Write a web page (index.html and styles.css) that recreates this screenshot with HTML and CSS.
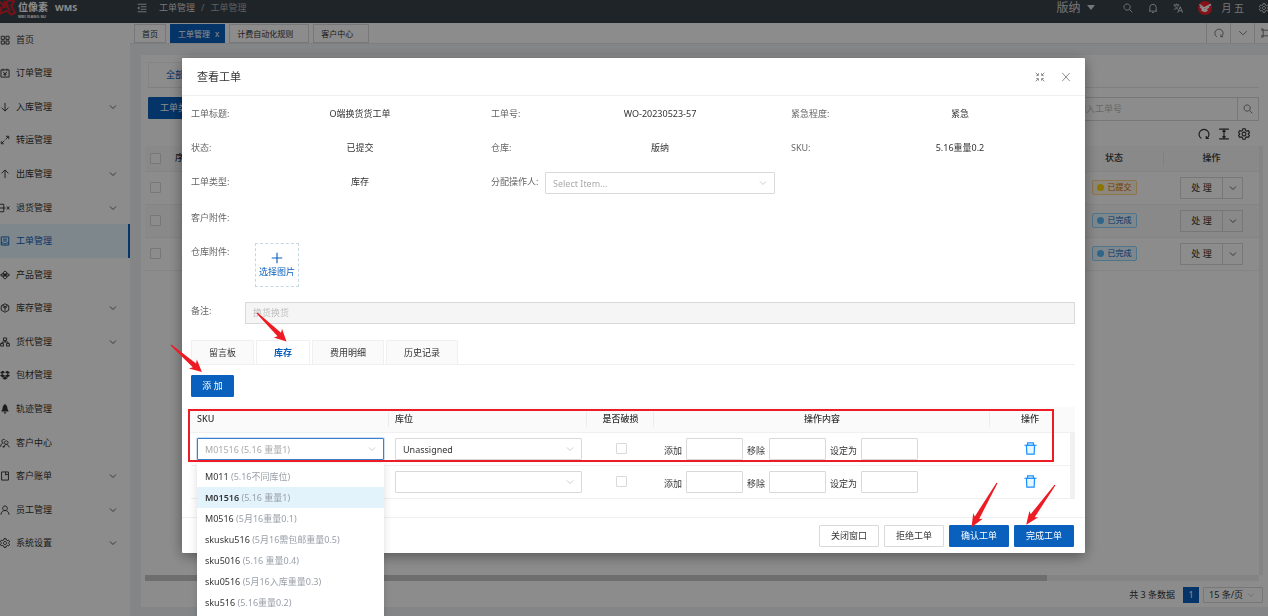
FILE: index.html
```html
<!DOCTYPE html>
<html lang="zh-CN">
  <head>
    <meta charset="utf-8">
    <title>工单管理 - WMS</title>
    <link rel="stylesheet" href="styles.css">
  </head>

  <body>
    <!-- icons -->
    <svg class="defs" aria-hidden="true">
      <symbol id="i-down" viewBox="0 0 16 16"><path d="M2 5l6 6 6-6"/></symbol>
      <symbol id="i-home" viewBox="0 0 16 16"><path d="M2 2h5v5H2zM9.500 2h5v5h-5zM2 9.500h5v5H2zM9.500 9.500h5v5h-5z"/></symbol>
      <symbol id="i-order" viewBox="0 0 16 16"><path d="M1.500 3h13v11.500h-13zM5 1v3M11 1v3M5 6l3 3.500L11 6M8 9.500V13M5.500 10h5"/></symbol>
      <symbol id="i-in" viewBox="0 0 16 16"><path d="M8 1.500v13M2.500 9L8 14.500 13.500 9"/></symbol>
      <symbol id="i-out" viewBox="0 0 16 16"><path d="M8 14.500v-13M2.500 7L8 1.500 13.500 7"/></symbol>
      <symbol id="i-transfer" viewBox="0 0 16 16"><path d="M3 13l4-4M9 7l4-4M9.500 2H14v4.500M2 10v4h4"/></symbol>
      <symbol id="i-return" viewBox="0 0 16 16"><path d="M0 2h6v12H0M0 8h9M11 5.500l4 5M15 5.500l-4 5"/></symbol>
      <symbol id="i-work" viewBox="0 0 16 16"><path d="M2 1.500h12v13H2zM5 5h6M5 8h6M2 11h3l1.500 1.500h3L11 11h3"/></symbol>
      <symbol id="i-product" viewBox="0 0 16 16"><path d="M8 1.500L15 8l-7 6.500L1 8zM5 5l6 6M11 5l-6 6M1 8h14M8 5.500L10.500 8 8 10.500 5.500 8z"/></symbol>
      <symbol id="i-stock" viewBox="0 0 16 16"><path d="M8 1.200l6 3.300v7L8 14.800l-6-3.300v-7zM4.500 6L8 8l3.500-2M8 8v4.500M4 3.500L8 6l4-2.500"/></symbol>
      <symbol id="i-tree" viewBox="0 0 16 16"><path d="M5.500 1.500h5v4h-5zM1 10.500h4.500v4H1zM10.500 10.500H15v4h-4.500zM8 5.500V8M3.200 10.500V8h9.600v2.500"/></symbol>
      <symbol id="i-box" viewBox="0 0 16 16"><path class="solid" d="M4.700 1L8 3.700 3.400 6.500 0 3.800zM11.300 1L16 3.800l-3.400 2.700L8 3.700zM0 9.200l3.400-2.700L8 9.300 4.700 12zM16 9.200l-3.400-2.700L8 9.300l3.300 2.700zM8 10l3.300 2.700 1.300-.8v1L8 15.500 3.400 12.900v-1l1.300.8z"/></symbol>
      <symbol id="i-track" viewBox="0 0 16 16"><path class="solid" d="M8 0c3 2 4 5 4 8l2 4H2l2-4c0-3 1-6 4-8zM5.500 13h5L8 16z"/></symbol>
      <symbol id="i-customer" viewBox="0 0 16 16"><path d="M1 14c0-4 2-5.500 4-6M7.500 2.500c-5-2-6 5-2 5.500M10 4.500a2.800 2.800 0 1 0 .1 0zM5.500 15c.5-6 8.500-6 9 0M4 14h4"/></symbol>
      <symbol id="i-bill" viewBox="0 0 16 16"><path d="M2.500 1.500h11v13h-11zM9 1.500v5l2-1.500 2 1.500"/></symbol>
      <symbol id="i-user" viewBox="0 0 16 16"><path d="M8 1.500a3.700 3.700 0 1 0 .1 0zM1.500 15.500c.5-9 12.500-9 13 0"/></symbol>
      <symbol id="i-gear" viewBox="0 0 16 16"><path d="M6.500 1h3l.6 2.200 1.500.9 2.300-.6 1.500 2.600L13.800 7.500v1l1.600 1.500-1.500 2.500-2.300-.6-1.500.9L9.500 15h-3l-.6-2.200-1.500-.9-2.300.6L.6 9.900l1.600-1.400v-1L.6 6l1.500-2.500 2.300.6 1.500-.9zM8 5.500a2.500 2.500 0 1 0 .1 0z"/></symbol>
      <symbol id="i-fold" viewBox="0 0 16 16"><path d="M1 2h14M6 6h9M6 10h9M1 14h14"/><path class="solid" d="M4 5v6L.5 8z"/></symbol>
      <symbol id="i-search" viewBox="0 0 16 16"><path d="M6.500 1.500a5 5 0 1 0 .1 0zM10.200 10.200L15 15"/></symbol>
      <symbol id="i-bell" viewBox="0 0 16 16"><path d="M3 13V7c0-6.500 10-6.500 10 0v6M1.500 13h13M6.500 15.200h3"/></symbol>
      <symbol id="i-lang" viewBox="0 0 16 16"><path d="M1 3h9M5.500 1v2M8.500 3C8 6.500 4.500 9.500 1.500 10.500M2.500 3c.5 3 3 5.500 5.500 7M7.500 15.500L11.500 6l4 9.500M9 12.500h5"/></symbol>
      <symbol id="i-redo" viewBox="0 0 16 16"><path d="M4.500 14A6.600 6.600 0 1 1 11.500 14M11 10.500V14h3.500"/></symbol>
      <symbol id="i-height" viewBox="0 0 16 16"><path d="M1.500 1.500h13M1.500 14.500h13M8 3.500v9M6 5l2-2 2 2M6 11l2 2 2-2"/></symbol>
      <symbol id="i-expand" viewBox="0 0 16 16"><path d="M3.500 3.500h9v9h-9zM0 1.500h3.500v2H0M0 14.500h3.500v-2H0M16 1.500h-3.500v2H16M16 14.500h-3.500v-2H16"/></symbol>
      <symbol id="i-shrink" viewBox="0 0 16 16"><path d="M1 1l4 4M5.500 2v3.500H2M15 1l-4 4M10.500 2v3.500H14M1 15l4-4M5.500 14v-3.500H2M15 15l-4-4M10.500 14v-3.500H14"/></symbol>
      <symbol id="i-close" viewBox="0 0 16 16"><path d="M2 1.500l12 13M14 1.500l-12 13"/></symbol>
      <symbol id="i-plus" viewBox="0 0 16 16"><path d="M8 1v14M1 8h14"/></symbol>
      <symbol id="i-trash" viewBox="0 0 16 16"><path class="fill-light" d="M3 4h10l-.5 11h-9z"/><path d="M.5 4h15M4.500 4V1.200h7V4"/></symbol>
    </svg>

    <div class="app">
      <header class="topbar">
        <div class="brand">
          <svg class="logo" viewBox="0 0 17 17"><path d="M0 3l4 3 5-5 6 1-3 5 4 7-4 2-5-4-7 3 1-5-2-3M2 9l5-2 4 5M4 2l5 5"/></svg>
          <div class="brand-name">位像素<small>WEI XIANG SU</small></div>
          <b>WMS</b>
        </div>
        <svg class="icon fold"><use href="#i-fold"/></svg>
        <nav class="crumbs"><a href="#">工单管理</a><span>/</span><span>工单管理</span></nav>
        <div class="top-right">
          <button class="warehouse">版纳<i class="caret"></i></button>
          <svg class="icon"><use href="#i-search"/></svg>
          <svg class="icon"><use href="#i-bell"/></svg>
          <svg class="icon"><use href="#i-lang"/></svg>
          <div class="user">
            <svg class="avatar" viewBox="0 0 14 14"><circle cx="7" cy="7" r="7"/><path d="M1.500 3.500L6 7l7-3.500M2 6l4.500 3L11 6M3.500 9l3.500 1.500L9.500 9"/></svg>
            <span>月 五</span>
          </div>
          <svg class="icon"><use href="#i-gear"/></svg>
        </div>
      </header>

      <aside class="sidebar">
        <ul class="menu">
          <li><a href="#"><svg class="icon"><use href="#i-home"/></svg>首页</a></li>
          <li><a href="#"><svg class="icon"><use href="#i-order"/></svg>订单管理</a></li>
          <li><a href="#"><svg class="icon"><use href="#i-in"/></svg>入库管理<svg class="arrow"><use href="#i-down"/></svg></a></li>
          <li><a href="#"><svg class="icon"><use href="#i-transfer"/></svg>转运管理</a></li>
          <li><a href="#"><svg class="icon"><use href="#i-out"/></svg>出库管理<svg class="arrow"><use href="#i-down"/></svg></a></li>
          <li><a href="#"><svg class="icon"><use href="#i-return"/></svg>退货管理<svg class="arrow"><use href="#i-down"/></svg></a></li>
          <li class="active"><a href="#"><svg class="icon"><use href="#i-work"/></svg>工单管理</a></li>
          <li><a href="#"><svg class="icon"><use href="#i-product"/></svg>产品管理</a></li>
          <li><a href="#"><svg class="icon"><use href="#i-stock"/></svg>库存管理<svg class="arrow"><use href="#i-down"/></svg></a></li>
          <li><a href="#"><svg class="icon"><use href="#i-tree"/></svg>货代管理<svg class="arrow"><use href="#i-down"/></svg></a></li>
          <li><a href="#"><svg class="icon"><use href="#i-box"/></svg>包材管理</a></li>
          <li><a href="#"><svg class="icon"><use href="#i-track"/></svg>轨迹管理</a></li>
          <li><a href="#"><svg class="icon"><use href="#i-customer"/></svg>客户中心</a></li>
          <li><a href="#"><svg class="icon"><use href="#i-bill"/></svg>客户账单<svg class="arrow"><use href="#i-down"/></svg></a></li>
          <li><a href="#"><svg class="icon"><use href="#i-user"/></svg>员工管理<svg class="arrow"><use href="#i-down"/></svg></a></li>
          <li><a href="#"><svg class="icon"><use href="#i-gear"/></svg>系统设置<svg class="arrow"><use href="#i-down"/></svg></a></li>
        </ul>
      </aside>

      <main class="main">
        <div class="tags">
          <a class="tag" href="#">首页</a>
          <a class="tag current" href="#">工单管理<span>x</span></a>
          <a class="tag closable" href="#">计费自动化规则</a>
          <a class="tag closable" href="#">客户中心</a>
          <div class="tag-tools">
            <button aria-label="刷新"><svg class="icon"><use href="#i-redo"/></svg></button>
            <button aria-label="更多"><svg class="icon"><use href="#i-down"/></svg></button>
            <button aria-label="全屏"><svg class="icon"><use href="#i-expand"/></svg></button>
          </div>
        </div>

        <section class="card">
          <div class="page-tabs"><a href="#">全部</a></div>
          <div class="filters">
            <button class="btn primary">工单类型</button>
            <div class="search">
              <input type="text" placeholder="请输入工单号" aria-label="工单号">
              <button aria-label="搜索"><svg class="icon"><use href="#i-search"/></svg></button>
            </div>
          </div>
          <div class="tools">
            <svg class="icon"><use href="#i-redo"/></svg>
            <svg class="icon"><use href="#i-height"/></svg>
            <svg class="icon"><use href="#i-gear"/></svg>
          </div>
          <div class="list-wrap">
            <table class="list">
              <colgroup><col class="w-check"><col class="w-no"><col><col class="w-status"><col class="w-op"></colgroup>
              <thead>
                <tr>
                  <th><input type="checkbox" aria-label="全选"></th>
                  <th>序号</th>
                  <th></th>
                  <th class="split">状态</th>
                  <th>操作</th>
                </tr>
              </thead>
              <tbody>
                <tr>
                  <td><input type="checkbox" aria-label="选择 1"></td>
                  <td>1</td>
                  <td></td>
                  <td><span class="status wait">已提交</span></td>
                  <td><div class="split-btn"><button>处 理</button><button aria-label="更多"><svg class="arrow"><use href="#i-down"/></svg></button></div></td>
                </tr>
                <tr class="odd">
                  <td><input type="checkbox" aria-label="选择 2"></td>
                  <td>2</td>
                  <td></td>
                  <td><span class="status done">已完成</span></td>
                  <td><div class="split-btn"><button>处 理</button><button aria-label="更多"><svg class="arrow"><use href="#i-down"/></svg></button></div></td>
                </tr>
                <tr>
                  <td><input type="checkbox" aria-label="选择 3"></td>
                  <td>3</td>
                  <td></td>
                  <td><span class="status done">已完成</span></td>
                  <td><div class="split-btn"><button>处 理</button><button aria-label="更多"><svg class="arrow"><use href="#i-down"/></svg></button></div></td>
                </tr>
              </tbody>
            </table>
          </div>
          <div class="scroll-x"><div class="thumb"></div></div>
          <div class="pager">
            <span>共 3 条数据</span>
            <button class="page-no">1</button>
            <div class="select-box">
              <select aria-label="每页条数"><option>15 条/页</option></select>
              <svg class="arrow"><use href="#i-down"/></svg>
            </div>
          </div>
        </section>
      </main>
    </div>

    <div class="mask">
      <div class="modal" role="dialog" aria-labelledby="modal-title">
        <div class="modal-head">
          <h1 id="modal-title">查看工单</h1>
          <button aria-label="缩小"><svg class="icon"><use href="#i-shrink"/></svg></button>
          <button aria-label="关闭"><svg class="icon"><use href="#i-close"/></svg></button>
        </div>

        <div class="modal-body">
          <div class="info">
            <div class="field"><span class="label">工单标题:</span><span class="value">O端换货货工单</span></div>
            <div class="field"><span class="label">工单号:</span><span class="value">WO-20230523-57</span></div>
            <div class="field"><span class="label">紧急程度:</span><span class="value">紧急</span></div>
            <div class="field"><span class="label">状态:</span><span class="value">已提交</span></div>
            <div class="field"><span class="label">仓库:</span><span class="value">版纳</span></div>
            <div class="field"><span class="label">SKU:</span><span class="value">5.16重量0.2</span></div>
            <div class="field"><span class="label">工单类型:</span><span class="value">库存</span></div>
            <div class="field">
              <label class="label" for="operator">分配操作人:</label>
              <div class="select-box">
                <select id="operator" class="empty"><option>Select Item...</option></select>
                <svg class="arrow"><use href="#i-down"/></svg>
              </div>
            </div>
          </div>
          <div class="field"><span class="label">客户附件:</span></div>
          <div class="field">
            <span class="label">仓库附件:</span>
            <button class="upload"><svg class="icon"><use href="#i-plus"/></svg>选择图片</button>
          </div>
          <div class="field remark">
            <label class="label" for="remark">备注:</label>
            <input id="remark" type="text" value="换货换货" disabled>
          </div>

          <div class="tabs" role="tablist">
            <button role="tab">留言板</button>
            <button role="tab" class="on" aria-selected="true">库存</button>
            <button role="tab">费用明细</button>
            <button role="tab">历史记录</button>
          </div>

          <button class="btn primary add">添 加</button>

          <table class="stock">
            <colgroup><col class="w-sku"><col class="w-sku"><col class="w-damage"><col><col class="w-del"><col class="w-bar"></colgroup>
            <thead>
              <tr>
                <th class="left split">SKU</th>
                <th class="left split">库位</th>
                <th class="split">是否破损</th>
                <th class="split">操作内容</th>
                <th>操作</th>
                <th></th>
              </tr>
            </thead>
            <tbody>
              <tr>
                <td class="sku-cell">
                  <div class="select-box focus">
                    <select class="empty" aria-label="SKU"><option>M01516 (5.16 重量1)</option></select>
                    <svg class="arrow"><use href="#i-down"/></svg>
                  </div>
                  <ul class="dropdown" role="listbox">
                    <li role="option">M011 <span>(5.16不同库位)</span></li>
                    <li role="option" class="picked" aria-selected="true">M01516 <span>(5.16 重量1)</span></li>
                    <li role="option">M0516 <span>(5月16重量0.1)</span></li>
                    <li role="option">skusku516 <span>(5月16需包邮重量0.5)</span></li>
                    <li role="option">sku5016 <span>(5.16 重量0.4)</span></li>
                    <li role="option">sku0516 <span>(5月16入库重量0.3)</span></li>
                    <li role="option">sku516 <span>(5.16重量0.2)</span></li>
                  </ul>
                </td>
                <td>
                  <div class="select-box">
                    <select aria-label="库位"><option>Unassigned</option></select>
                    <svg class="arrow"><use href="#i-down"/></svg>
                  </div>
                </td>
                <td><input type="checkbox" aria-label="是否破损"></td>
                <td>
                  <div class="ops">
                    <label for="add-1">添加</label><input id="add-1" type="text">
                    <label for="remove-1">移除</label><input id="remove-1" type="text">
                    <label for="set-1">设定为</label><input id="set-1" type="text">
                  </div>
                </td>
                <td><button class="del" aria-label="删除"><svg class="icon"><use href="#i-trash"/></svg></button></td>
                <td class="bar"></td>
              </tr>
              <tr>
                <td>
                  <div class="select-box">
                    <select aria-label="SKU"><option></option></select>
                    <svg class="arrow"><use href="#i-down"/></svg>
                  </div>
                </td>
                <td>
                  <div class="select-box">
                    <select aria-label="库位"><option></option></select>
                    <svg class="arrow"><use href="#i-down"/></svg>
                  </div>
                </td>
                <td><input type="checkbox" aria-label="是否破损"></td>
                <td>
                  <div class="ops">
                    <label for="add-2">添加</label><input id="add-2" type="text">
                    <label for="remove-2">移除</label><input id="remove-2" type="text">
                    <label for="set-2">设定为</label><input id="set-2" type="text">
                  </div>
                </td>
                <td><button class="del" aria-label="删除"><svg class="icon"><use href="#i-trash"/></svg></button></td>
                <td class="bar"></td>
              </tr>
            </tbody>
          </table>
        </div>

        <div class="modal-foot">
          <button class="btn">关闭窗口</button>
          <button class="btn">拒绝工单</button>
          <button class="btn primary">确认工单</button>
          <button class="btn primary">完成工单</button>
        </div>

        <!-- red guide marks over the dialog -->
        <svg class="marks" aria-hidden="true">
          <rect x="7" y="352" width="864" height="51"/>
          <path d="M0-.6L31-2.500 29-6 41 0 29 6 31 2.500 0 .6z" transform="translate(75 255) rotate(44)"/>
          <path d="M0-.6L31-2.500 29-6 41 0 29 6 31 2.500 0 .6z" transform="translate(-11 287) rotate(41)"/>
          <path d="M0-.6L40-2.500 38-5.500 51 0 38 5.500 40 2.500 0 .6z" transform="translate(815 425) rotate(120)"/>
          <path d="M0-.6L38-2.500 36-5.500 49 0 36 5.500 38 2.500 0 .6z" transform="translate(873 427) rotate(126)"/>
        </svg>
      </div>
    </div>
  </body>
</html>
```
FILE: styles.css
```css
* {
  box-sizing: border-box;
}
body {
  margin: 0;
  height: 100vh;
  overflow: hidden;
  background-color: #f0f2f5;
  color: #333;
  font-family: "Noto Sans", "Noto Sans CJK SC", sans-serif;
  font-size: 9px;
  line-height: 22px;
}
button, input, select {
  margin: 0;
  padding: 0;
  font: inherit;
  color: inherit;
  background: none;
  border: 0;
  outline: 0;
}
a {
  color: inherit;
  text-decoration: none;
}
ul {
  margin: 0;
  padding: 0;
  list-style: none;
}
svg {
  display: block;
  flex: none;
  fill: none;
  stroke: currentColor;
  stroke-width: 1.5;
}
.defs {
  position: absolute;
  width: 0;
  height: 0;
}
.solid {
  fill: currentColor;
  stroke: none;
}
.icon {
  width: 10px;
  height: 10px;
}
.arrow {
  width: 8px;
  height: 8px;
}
input[type="checkbox"] {
  appearance: none;
  display: block;
  width: 11px;
  height: 11px;
  margin: 0 auto;
  background-color: #fff;
  border: 1px solid #d9d9d9;
  border-radius: 1px;
}
table {
  width: 100%;
  border-collapse: collapse;
  table-layout: fixed;
}
th {
  font-weight: 500;
}

/* page frame */
.app {
  display: grid;
  grid-template-columns: 130px 1fr;
  grid-template-rows: 23px 1fr;
  height: 100vh;
}
.topbar {
  grid-column: 1 / 3;
  display: flex;
  align-items: center;
  padding-bottom: 8px;
  background-color: #394249;
  color: #d5d7d9;
  line-height: 14px;
}
.brand {
  display: flex;
  align-items: center;
  gap: 2px;
  width: 137px;
  color: #fff;
}
.logo {
  width: 16px;
  height: 17px;
  color: #e0202c;
  stroke-width: 2;
}
.brand-name {
  width: 35px;
  padding-top: 5px;
  font-family: "Liberation Sans", "Noto Sans CJK SC", sans-serif;
  font-size: 10px;
  font-weight: 700;
  line-height: 12px;
}
.brand-name small {
  display: block;
  font-size: 4px;
  line-height: 5px;
}
.crumbs {
  display: flex;
  gap: 6px;
  margin-left: 12px;
}
.crumbs span {
  color: #a8adb1;
}
.top-right {
  display: flex;
  align-items: center;
  gap: 15px;
  margin-left: auto;
  margin-right: -1px;
}
.warehouse {
  display: flex;
  align-items: center;
  gap: 7px;
  margin-right: 13px;
  font-size: 12px;
}
.caret {
  border: 4px solid transparent;
  border-top: 5px solid currentColor;
  border-bottom: 0;
}
.user {
  display: flex;
  align-items: center;
  gap: 9px;
  font-size: 10px;
}
.avatar {
  width: 14px;
  height: 14px;
  stroke: #fff;
}
.avatar circle {
  fill: #f5222d;
  stroke: none;
}

.sidebar {
  display: flex;
  background-color: #fff;
}
.menu {
  flex: 1;
  display: grid;
  grid-auto-rows: 1fr;
  padding-bottom: 56px;
}
.menu a {
  display: flex;
  align-items: center;
  gap: 6px;
  height: 100%;
  padding-right: 13px;
}
.menu .arrow {
  margin-left: auto;
}
.menu .active {
  background-color: #e6f7ff;
  border-right: 2px solid #0960bd;
  color: #0960bd;
}

/* opened page tags */
.main {
  display: flex;
  flex-direction: column;
  min-width: 0;
}
.tags {
  display: flex;
  align-items: center;
  gap: 4px;
  height: 21px;
  padding-left: 4px;
  background-color: #fff;
  border-bottom: 1px solid #e4e6e9;
  font-size: 8px;
}
.tag {
  height: 19px;
  padding: 0 7px;
  border: 1px solid #d9d9d9;
  line-height: 17px;
}
.tag.closable {
  padding-right: 15px;
}
.tag.current {
  padding-right: 5px;
  background-color: #0960bd;
  border-color: #0960bd;
  color: #fff;
}
.tag span {
  margin-left: 5px;
}
.tag-tools {
  display: flex;
  margin-left: auto;
  color: #777;
}
.tag-tools button {
  display: grid;
  place-items: center;
  width: 24px;
  height: 20px;
  border-left: 1px solid #d9d9d9;
}
.tag-tools button:last-child {
  justify-items: start;
  width: 14px;
  padding-left: 6px;
  overflow: hidden;
}

/* order list behind the dialog */
.card {
  flex: 1;
  display: flex;
  flex-direction: column;
  margin: 11px 0 9px 11px;
  padding: 7px 5px 1px 4px;
  background-color: #fff;
}
.page-tabs {
  display: flex;
  margin: 0 4px 0 3px;
  border-bottom: 1px solid #e8e8e8;
}
.page-tabs a {
  padding: 1px 17px;
  border: 1px solid #f0f0f0;
  border-bottom: 0;
  color: #0960bd;
}
.filters {
  display: flex;
  justify-content: space-between;
  margin: 9px 4px 0 3px;
}
.btn {
  min-width: 60px;
  height: 22px;
  border: 1px solid #d9d9d9;
  border-radius: 1px;
  background-color: #fff;
  line-height: 20px;
  text-align: center;
}
.btn.primary {
  background-color: #0960bd;
  border-color: #0960bd;
  color: #fff;
}
.search {
  display: flex;
  width: 200px;
  border: 1px solid #d9d9d9;
}
.search input {
  flex: 1;
  min-width: 0;
  padding-left: 8px;
}
::placeholder {
  color: #bfbfbf;
  opacity: 1;
}
.search button {
  display: grid;
  place-items: center;
  width: 21px;
  border-left: 1px solid #d9d9d9;
  color: #777;
}
.tools {
  display: flex;
  justify-content: flex-end;
  align-items: center;
  gap: 8px;
  height: 25px;
  padding-right: 13px;
}
.tools .icon {
  width: 12px;
  height: 12px;
}
.list-wrap {
  flex: 1;
  border-right: 4px solid #f1f1f1;
}
.w-check {
  width: 21px;
}
.w-no {
  width: 36px;
}
.w-status {
  width: 100px;
}
.w-op {
  width: 95px;
}
.list th {
  height: 25px;
  padding: 0;
  background-color: #fafafa;
  border-bottom: 1px solid #f0f0f0;
}
.list td {
  height: 33px;
  padding: 0;
  border-bottom: 1px solid #f0f0f0;
  text-align: center;
}
.list .odd {
  background-color: #fafafa;
}
.split {
  background-image: linear-gradient(#ececec, #ececec);
  background-repeat: no-repeat;
  background-position: right center;
  background-size: 1px 15px;
}
.status {
  display: inline-flex;
  align-items: center;
  gap: 4px;
  height: 15px;
  padding: 0 4px;
  border: 1px solid;
  border-radius: 2px;
  font-size: 8px;
}
.status::before {
  content: "";
  width: 7px;
  height: 7px;
  border-radius: 50%;
}
.status.wait {
  background-color: #fff7e6;
  border-color: #ffd591;
  color: #d46b08;
}
.status.wait::before {
  background-color: #ffd700;
}
.status.done {
  background-color: #e6f7ff;
  border-color: #91d5ff;
  color: #0960bd;
}
.status.done::before {
  background-color: #55b8f8;
}
.split-btn {
  display: inline-flex;
  height: 22px;
  border: 1px solid #d9d9d9;
  vertical-align: middle;
}
.split-btn button {
  width: 41px;
  line-height: 20px;
}
.split-btn button:last-child {
  display: grid;
  place-items: center;
  width: 20px;
  border-left: 1px solid #d9d9d9;
}
.scroll-x {
  height: 6px;
  margin-right: 4px;
  background-color: #f1f1f1;
}
.thumb {
  width: 81%;
  height: 6px;
  background-color: #c8c8c8;
}
.pager {
  display: flex;
  justify-content: flex-end;
  align-items: center;
  gap: 4px;
  margin-top: 3px;
}
.pager .page-no {
  width: 16px;
  height: 16px;
  margin-left: 4px;
  background-color: #0960bd;
  color: #fff;
  line-height: 16px;
}

/* dialog */
.mask {
  position: fixed;
  inset: 0;
  overflow: hidden;
  background-color: rgba(0, 0, 0, 0.45);
}
.modal {
  position: relative;
  margin: 58px 183px 0 182px;
  background-color: #fff;
  border-radius: 1px;
  box-shadow: 0 3px 14px rgba(0, 0, 0, 0.4);
}
.modal-head {
  display: flex;
  align-items: center;
  gap: 16px;
  height: 38px;
  padding: 0 14px 0 15px;
  border-bottom: 1px solid #f0f0f0;
}
.modal-head h1 {
  margin: 0 auto 0 0;
  font-size: 11px;
  font-weight: 400;
}
.modal-head button {
  color: #888;
}
.modal-body {
  padding: 7px 10px 18px 9px;
}
.info {
  display: grid;
  grid-template-columns: repeat(3, 1fr);
  column-gap: 16px;
  margin-bottom: 2px;
}
.field {
  display: flex;
  min-height: 34px;
}
.label {
  min-width: 54px;
  color: #666;
}
.value {
  flex: 1;
  text-align: center;
}
.select-box {
  position: relative;
  flex: 1;
  height: 22px;
  background-color: #fff;
  border: 1px solid #d9d9d9;
  border-radius: 1px;
}
.select-box select {
  appearance: none;
  display: block;
  width: 100%;
  height: 100%;
  padding: 0 20px 0 7px;
}
.select-box .empty {
  color: #aaa;
}
.select-box .arrow {
  position: absolute;
  top: 50%;
  right: 7px;
  margin-top: -4px;
  color: #bbb;
  pointer-events: none;
}
.pager .select-box {
  flex: none;
  width: 60px;
  height: 16px;
}
.pager .select-box select {
  padding: 0 0 0 5px;
  line-height: 14px;
}
.info .select-box {
  margin-top: 1px;
}
.select-box.focus {
  border-color: #3a80ca;
  box-shadow: 0 0 0 1px rgba(9, 96, 189, 0.2);
}
.upload {
  display: flex;
  flex-direction: column;
  align-items: center;
  justify-content: center;
  width: 44px;
  height: 44px;
  margin: 2px 0 13px 10px;
  border: 1px dashed #c5d8e0;
  color: #0960bd;
  line-height: 14px;
}
.upload .icon {
  width: 12px;
  height: 12px;
  margin-bottom: 1px;
}
.remark input {
  flex: 1;
  height: 22px;
  margin-top: 2px;
  padding: 0 7px;
  background-color: #f5f5f5;
  border: 1px solid #d9d9d9;
  color: #bfbfbf;
}
.tabs {
  display: flex;
  gap: 2px;
  margin-top: 6px;
  border-bottom: 1px solid #f0f0f0;
}
.tabs button {
  height: 24px;
  padding: 0 17px;
  background-color: #fafafa;
  border: 1px solid #f0f0f0;
  border-bottom: 0;
}
.tabs .on {
  margin-bottom: -1px;
  background-color: #fff;
  color: #0960bd;
  font-weight: 700;
}
.btn.add {
  display: block;
  min-width: 43px;
  margin: 10px 0;
}
.w-sku {
  width: 198px;
}
.w-damage {
  width: 67px;
}
.w-del {
  width: 80px;
}
.w-bar {
  width: 5px;
}
.stock th {
  height: 25px;
  padding: 0;
  background-color: #fafafa;
  border-bottom: 1px solid #f0f0f0;
}
.stock .left {
  padding-left: 6px;
  text-align: left;
}
.stock td {
  height: 33px;
  padding: 0 5px 0 6px;
  border-bottom: 1px solid #f0f0f0;
}
.stock .bar {
  padding: 0;
  background-color: #f1f1f1;
}
.sku-cell {
  position: relative;
}
.dropdown {
  position: absolute;
  z-index: 2;
  top: 30px;
  left: 6px;
  right: 5px;
  height: 171px;
  padding: 3px 0;
  background-color: #fff;
  box-shadow: 0 2px 8px rgba(0, 0, 0, 0.15);
  line-height: 21px;
}
.dropdown li {
  padding: 0 8px;
  white-space: nowrap;
}
.dropdown span {
  color: #999ea8;
  font-weight: 400;
}
.dropdown .picked {
  background-color: #e3f3fc;
  font-weight: 600;
}
.ops {
  display: flex;
  align-items: flex-end;
  gap: 4px;
  padding-left: 4px;
}
.ops label {
  line-height: 18px;
}
.ops input {
  width: 57px;
  height: 22px;
  border: 1px solid #d9d9d9;
  border-radius: 1px;
}
.del {
  display: block;
  margin: 0 auto;
  color: #1890ff;
}
.del .icon {
  width: 13px;
  height: 13px;
}
.fill-light {
  fill: #e6f7ff;
}
.modal-foot {
  display: flex;
  justify-content: flex-end;
  gap: 5px;
  padding: 7px 11px 6px;
  border-top: 1px solid #f0f0f0;
}
.marks {
  position: absolute;
  z-index: 3;
  inset: 0;
  width: 100%;
  height: 100%;
  overflow: visible;
  pointer-events: none;
}
.marks rect {
  stroke: #ed1c24;
  stroke-width: 2;
}
.marks path {
  fill: #ed1c24;
  stroke: none;
}
```
